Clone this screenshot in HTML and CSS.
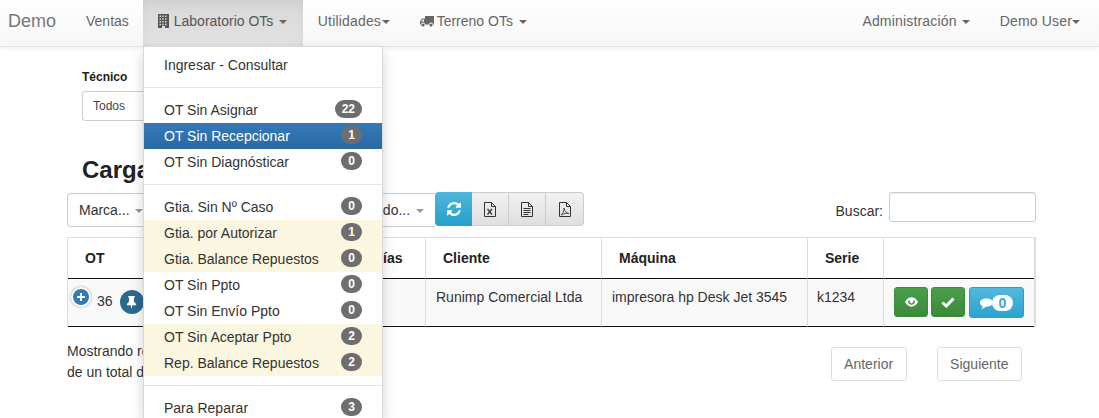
FILE: index.html
```html
<!DOCTYPE html>
<html lang="es">
<head>
<meta charset="utf-8">
<title>Demo</title>
<link rel="stylesheet" href="styles.css">
</head>
<body>
<nav class="navbar">
  <a class="brand">Demo</a>
  <a class="nav-item">Ventas</a>
  <a class="nav-item active">
    <svg class="ico-building" viewBox="0 0 11 14"><path fill="#555" fill-rule="evenodd" d="M0 0h11v14H7v-2H4v2H0zM1.500 1.500v1.500h1.500V1.500zM4.200 1.500v1.500h1.500V1.500zM7 1.500v1.500h1.500V1.500zM1.500 4.200v1.500h1.500V4.200zM4.200 4.200v1.500h1.500V4.200zM7 4.200v1.500h1.500V4.200zM1.500 7v1.500h1.500V7zM4.200 7v1.500h1.500V7zM7 7v1.500h1.500V7zM1.500 9.700v1.500h1.500V9.700zM4.200 9.700v1.500h1.500V9.700zM7 9.700v1.500h1.500V9.700z"/></svg>
    Laboratorio OTs <span class="caret"></span>
  </a>
  <a class="nav-item wide">Utilidades<span class="caret tight"></span></a>
  <a class="nav-item">
    <svg class="ico-truck" viewBox="0 0 14 11"><path fill="#666" d="M5 0h9v8.500h-1a2 2 0 0 0-4 0H5a2 2 0 0 0-4 0H0V5.500L2 2.500h3zM1.200 5.500H4V3.400H2.600z" fill-rule="evenodd"/><circle cx="3" cy="9" r="1.600" fill="#666"/><circle cx="11" cy="9" r="1.600" fill="#666"/></svg>
    Terreno OTs <span class="caret"></span>
  </a>
  <div class="nav-right">
    <a class="nav-item wide">Administración <span class="caret"></span></a>
    <a class="nav-item wide">Demo User<span class="caret tight"></span></a>
  </div>
</nav>

<main class="page">
  <div class="filter">
    <label class="filter-label">Técnico</label>
    <div class="filter-select">Todos</div>
  </div>
  <h2 class="title">Carga</h2>

  <div class="toolbar">
    <div class="select-group">
      <span class="select-cell">Marca... <span class="caret grey"></span></span>
      <span class="select-cell end">Estado... <span class="caret grey"></span></span>
    </div>
    <div class="btn-group">
      <button class="tool info"><svg class="ico-refresh" viewBox="0 0 1536 1536"><path fill="#fff" d="M1511 928q0 5-1 7-64 268-268 434.500t-478 166.500q-146 0-282.500-55t-243.500-157l-129 129q-19 19-45 19t-45-19-19-45v-448q0-26 19-45t45-19h448q26 0 45 19t19 45-19 45l-137 137q71 66 161 102t187 36q134 0 250-65t186-179q11-17 53-117 8-23 30-23h192q13 0 22.500 9.500t9.500 22.500zm25-800v448q0 26-19 45t-45 19h-448q-26 0-45-19t-19-45 19-45l138-138q-148-137-349-137-134 0-250 65t-186 179q-11 17-53 117-8 23-30 23h-199q-13 0-22.500-9.500t-9.500-22.500v-7q65-268 270-434.500t480-166.500q146 0 284 55.500t245 156.500l130-129q19-19 45-19t45 19 19 45z"/></svg></button>
      <button class="tool"><svg class="ico-file" viewBox="0 0 12 15"><path fill="none" stroke="#333" d="M.5.500h7l4 4v10H.5zM7.500.500v4h4"/><path fill="none" stroke="#333" stroke-width="1.200" d="M3.500 7l4.500 5.500M8 7l-4.500 5.500"/></svg></button>
      <button class="tool"><svg class="ico-file" viewBox="0 0 12 15"><path fill="none" stroke="#333" d="M.5.500h7l4 4v10H.5zM7.500.500v4h4M2.500 6.500h7M2.500 8.500h7M2.500 10.500h7M2.500 12.500h5"/></svg></button>
      <button class="tool"><svg class="ico-file" viewBox="0 0 12 15"><path fill="none" stroke="#333" d="M.5.500h7l4 4v10H.5zM7.500.500v4h4"/><path fill="none" stroke="#333" stroke-width=".8" d="M2 13c2-1 3-4 3-7 .5 3 2 5 5 5.500-3-.5-5 0-8 1.500z"/></svg></button>
    </div>
    <div class="search">
      <label class="search-label">Buscar:</label>
      <div class="search-input"></div>
    </div>
  </div>

  <table class="grid">
    <colgroup>
      <col class="c-ot"><col class="c-fecha"><col class="c-dias"><col class="c-cliente"><col class="c-maquina"><col class="c-serie"><col class="c-acciones">
    </colgroup>
    <thead>
      <tr><th>OT</th><th></th><th>Días</th><th>Cliente</th><th>Máquina</th><th>Serie</th><th></th></tr>
    </thead>
    <tbody>
      <tr>
        <td class="ot-cell">
          <div class="ot-inner">
            <span class="plus"><svg viewBox="0 0 10 10"><path stroke="#fff" stroke-width="1.800" d="M5 1v8M1 5h8"/></svg></span>
            <span class="ot-num">36</span>
            <span class="pin"><svg viewBox="0 0 12 14"><path fill="#fff" d="M2.500 0h7v1.200L8.600 2v4l2.400 2.500V10H7l-1 4-1-4H1V8.500L3.400 6V2l-.9-.8z"/></svg></span>
          </div>
        </td>
        <td></td>
        <td></td>
        <td>Runimp Comercial Ltda</td>
        <td>impresora hp Desk Jet 3545</td>
        <td class="serie-cell">k1234</td>
        <td class="act-cell">
          <div class="actions">
            <button class="act green"><svg class="ico-eye" viewBox="0 0 14 10"><path fill="#fff" fill-rule="evenodd" d="M0 5c1.500-3 4-5 7-5s5.500 2 7 5c-1.500 3-4 5-7 5S1.500 8 0 5zm3.500-.5a3.500 3.500 0 0 0 7 0 3.500 3.500 0 0 0-.6-2 3 3 0 0 1-5.800 0 3.500 3.500 0 0 0-.6 2z"/><circle cx="7" cy="5" r="1.600" fill="#fff"/></svg></button>
            <button class="act green"><svg class="ico-check" viewBox="0 0 14 11"><path fill="none" stroke="#fff" stroke-width="3" d="M1.500 5.500l3.800 3.500 7.200-7.500"/></svg></button>
            <button class="act blue"><svg class="ico-comment" viewBox="0 0 14 12"><path fill="#fff" d="M7 0c3.900 0 7 2 7 4.500S10.900 9 7 9l-1 0c-1 1-2.500 2-4.500 2.500 1-1 1.300-2 1.300-3C1 7.700 0 6.200 0 4.500 0 2 3.100 0 7 0z"/></svg><span class="count">0</span></button>
          </div>
        </td>
      </tr>
    </tbody>
  </table>

  <div class="footer">
    <div class="info-text">Mostrando registros del 1 al 1<br>de un total de 1 registros</div>
    <div class="pager">
      <a class="page-btn">Anterior</a>
      <a class="page-btn">Siguiente</a>
    </div>
  </div>
</main>

<ul class="menu">
  <li class="row">Ingresar - Consultar</li>
  <li class="divider"></li>
  <li class="row">OT Sin Asignar <span class="badge">22</span></li>
  <li class="row current">OT Sin Recepcionar <span class="badge">1</span></li>
  <li class="row">OT Sin Diagnósticar <span class="badge">0</span></li>
  <li class="divider"></li>
  <li class="row">Gtia. Sin Nº Caso <span class="badge">0</span></li>
  <li class="row warn">Gtia. por Autorizar <span class="badge">1</span></li>
  <li class="row warn">Gtia. Balance Repuestos <span class="badge">0</span></li>
  <li class="row">OT Sin Ppto <span class="badge">0</span></li>
  <li class="row">OT Sin Envío Ppto <span class="badge">0</span></li>
  <li class="row warn">OT Sin Aceptar Ppto <span class="badge">2</span></li>
  <li class="row warn">Rep. Balance Repuestos <span class="badge">2</span></li>
  <li class="divider"></li>
  <li class="row">Para Reparar <span class="badge">3</span></li>
</ul>
</body>
</html>
```
FILE: styles.css
```css
* { box-sizing: border-box; }
html, body { margin: 0; height: 418px; overflow: hidden; }
body {
  position: relative;
  background: #fff;
  color: #333;
  font: 14px/20px "Liberation Sans", Arial, sans-serif;
}

/* navbar */
.navbar {
  display: flex;
  height: 47px;
  background: linear-gradient(to bottom, #fff 0%, #f6f6f6 100%);
  border-bottom: 1px solid #e4e4e4;
  box-shadow: 0 1px 5px rgba(0, 0, 0, .075);
  color: #666;
}
.brand { padding: 0 15px 0 8px; font-size: 18px; line-height: 42px; color: #777; }
.nav-item { display: block; padding: 0 15px; line-height: 42px; white-space: nowrap; }
.nav-item.wide { letter-spacing: .17px; }
.nav-item.active {
  height: 46px;
  width: 160px;
  margin-left: -1px;
  padding-right: 0;
  color: #555;
  background: linear-gradient(to bottom, #d8d8d8 0%, #e2e2e2 100%);
  box-shadow: inset 0 3px 9px rgba(0, 0, 0, .05);
}
.nav-right { display: flex; margin-left: auto; padding-right: 4px; }
.caret {
  display: inline-block;
  width: 0;
  height: 0;
  margin-left: 2px;
  vertical-align: middle;
  border-top: 4px solid #666;
  border-left: 4px solid transparent;
  border-right: 4px solid transparent;
}
.caret.tight { margin-left: 1px; }
.caret.grey { border-top-color: #999; margin-left: 2px; }
.nav-right .caret { margin-left: 1px; }
.nav-right .caret.tight { margin-left: 0; }
.ico-building { width: 11px; height: 14px; vertical-align: -2px; margin-right: 1px; }
.ico-truck { width: 14px; height: 11px; vertical-align: -1px; margin-right: -1px; }

/* content */
.page { padding: 23px 63px 0 67px; }
.filter { padding-left: 15px; }
.filter-label { display: block; font-size: 12px; font-weight: 700; line-height: 14px; color: #222; }
.filter-select {
  width: 200px;
  height: 30px;
  margin-top: 7px;
  padding-left: 10px;
  border: 1px solid #ccc;
  border-radius: 3px;
  font-size: 12px;
  line-height: 28px;
  color: #444;
}
.title {
  margin: 36px 0 0 15px;
  font-size: 24px;
  font-weight: 700;
  line-height: 26px;
  color: #222;
}
.toolbar { display: flex; height: 34px; margin-top: 9px; align-items: flex-start; }
.select-group {
  display: flex;
  justify-content: space-between;
  width: 368px;
  height: 34px;
  margin-top: 1px;
  padding: 0 11px;
  border: 1px solid #ccc;
  border-right: 0;
  border-radius: 4px 0 0 4px;
  line-height: 33px;
  color: #333;
}
.btn-group { display: flex; height: 34px; }
.tool {
  width: 37px;
  height: 34px;
  margin: 0;
  padding: 0;
  display: flex;
  align-items: center;
  justify-content: center;
  border: 1px solid #ccc;
  border-left-width: 0;
  background: linear-gradient(to bottom, #f1f1f1 0%, #dfdfdf 100%);
}
.tool:first-child { border: 0; border-radius: 4px 0 0 4px; }
.tool:last-child { width: 38px; border-radius: 0 4px 4px 0; }
.tool.info { background: linear-gradient(to bottom, #4fb6da 0%, #259fcd 100%); }
.ico-refresh { width: 14px; height: 14px; }
.ico-file { width: 12px; height: 15px; }
.search { display: flex; align-items: flex-end; margin-left: auto; height: 30px; }
.search-label { line-height: 20px; margin-right: 6px; position: relative; top: -1px; }
.search-input {
  width: 147px;
  height: 30px;
  border: 1px solid #ccc;
  border-radius: 3px;
  box-shadow: inset 0 1px 1px rgba(0, 0, 0, .075);
}

/* table */
.grid {
  width: 969px;
  margin-top: 11px;
  table-layout: fixed;
  border-collapse: separate;
  border-spacing: 0;
  border-top: 1px solid #ddd;
  border-right: 2px solid #ddd;
  border-left: 1px solid #ddd;
}
.c-ot { width: 77px; }
.c-fecha { width: 210px; }
.c-dias { width: 70px; }
.c-cliente { width: 176px; }
.c-maquina { width: 206px; }
.c-serie { width: 76px; }
.c-acciones { width: 151px; }
.grid th {
  height: 41px;
  padding: 0 0 0 17px;
  text-align: left;
  font-weight: 700;
  color: #222;
  border-left: 1px solid #ddd;
  border-bottom: 1px solid #111;
}
.grid th:first-child, .grid td:first-child { border-left: 0; }
.grid td {
  height: 48px;
  padding: 8px 10px;
  vertical-align: top;
  background: #f9f9f9;
  border-left: 1px solid #ddd;
  border-bottom: 1px solid #111;
  white-space: nowrap;
}
.grid td.serie-cell { padding-left: 9px; }
.grid td.ot-cell { padding: 9px 0 0 5px; }
.ot-inner { display: flex; align-items: flex-start; }
.plus {
  display: flex;
  align-items: center;
  justify-content: center;
  width: 16px;
  height: 16px;
  margin-top: 1px;
  border-radius: 50%;
  background: #337ab7;
  box-shadow: 0 0 0 2px #fff, 0 0 3px 2px rgba(0, 0, 0, .35);
}
.plus svg { width: 10px; height: 10px; }
.ot-num { margin: 3px 0 0 8px; }
.pin {
  display: flex;
  align-items: center;
  justify-content: center;
  width: 24px;
  height: 24px;
  margin: 2px 0 0 7px;
  border-radius: 50%;
  background: #2a6a8f;
}
.pin svg { width: 11px; height: 13px; }
.grid td.act-cell { padding: 8px 0 0 10px; }
.actions { display: flex; align-items: flex-start; }
.act {
  display: flex;
  align-items: center;
  justify-content: center;
  height: 30px;
  margin: 0;
  padding: 0;
  border-radius: 3px;
  border: 1px solid #3d8b3d;
}
.act.green { width: 34px; margin-right: 3px; background: linear-gradient(to bottom, #4a9f4a 0%, #3a8a3a 100%); }
.act.blue {
  width: 55px;
  height: 31px;
  margin-left: 1px;
  border-color: #2a9fcb;
  background: linear-gradient(to bottom, #55b8dc 0%, #2aa3d0 100%);
}
.ico-eye { width: 13px; height: 10px; }
.ico-check { width: 14px; height: 11px; }
.ico-comment { width: 13px; height: 12px; margin-top: 3px; }
.count {
  width: 21px;
  height: 16px;
  margin-left: -1px;
  border-radius: 9px;
  background: #fff;
  color: #3aa9d4;
  font-size: 14px;
  font-weight: 700;
  line-height: 16px;
  text-align: center;
}

/* footer */
.footer { display: flex; justify-content: space-between; margin-top: 14px; }
.info-text { line-height: 21px; color: #333; }
.pager { display: flex; gap: 30px; margin: 6px 14px 0 0; }
.page-btn {
  height: 34px;
  padding: 0 12.5px;
  border: 1px solid #ddd;
  border-radius: 3px;
  line-height: 32px;
  color: #666;
}

/* dropdown */
.menu {
  position: absolute;
  top: 46px;
  left: 143px;
  width: 240px;
  height: 372px;
  overflow: hidden;
  margin: 0;
  padding: 5px 0;
  list-style: none;
  background: #fff;
  border: 1px solid rgba(0, 0, 0, .15);
  border-bottom: 0;
  box-shadow: 0 6px 12px rgba(0, 0, 0, .175);
}
.row {
  display: flex;
  justify-content: space-between;
  height: 26px;
  padding: 3px 20px 0;
  line-height: 20px;
  color: #333;
}
.row.warn { background: #fbf6df; }
.row.current { color: #fff; background: linear-gradient(to bottom, #337ab7 0%, #2b69a3 100%); }
.divider { height: 1px; margin: 9px 0; background: #e5e5e5; }
.badge {
  min-width: 21px;
  height: 18px;
  padding: 0 7px;
  margin-top: 0;
  border-radius: 10px;
  background: #6e6e6e;
  color: #fff;
  font-size: 12px;
  font-weight: 700;
  line-height: 18px;
  text-align: center;
}
```
